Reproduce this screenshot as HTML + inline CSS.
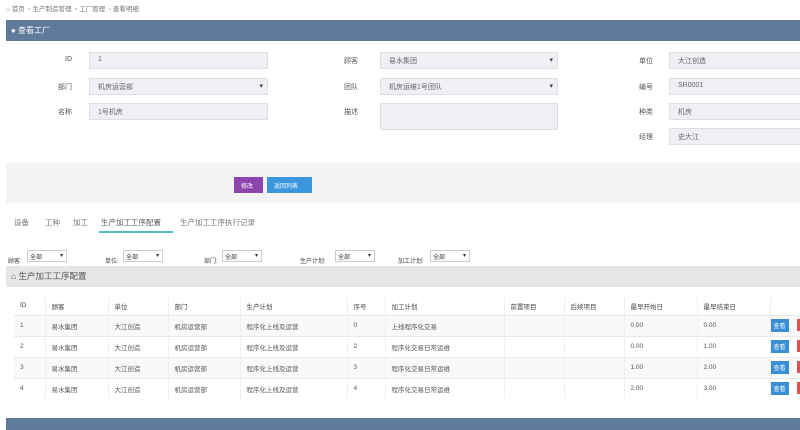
<!DOCTYPE html>
<html><head><meta charset="utf-8"><style>
*{margin:0;padding:0;box-sizing:border-box}
body{width:800px;height:430px;overflow:hidden;background:#fff;font-family:"Liberation Sans","Noto Sans CJK SC",sans-serif;font-size:7px;color:#555;position:relative}
.a{position:absolute;white-space:nowrap}
.inp{position:absolute;height:17px;background:#eef0f4;border:1px solid #dcdfe5;padding:3px 8px;font-size:7px;color:#666}
.sel::after{content:"▾";position:absolute;right:4px;top:3px;font-size:7px;color:#444}
.lbl{position:absolute;font-size:7px;color:#555;text-align:right;width:40px}
.fs{position:absolute;height:12px;border:1px solid #ccc;background:#fff;font-size:6px;padding:1px 2px;color:#333}
.fs::after{content:"▾";position:absolute;right:3px;top:1px}
.fl{position:absolute;font-size:6px;color:#444}
.t{position:absolute;top:217px;font-size:7.5px;color:#777;white-space:nowrap}
table{position:absolute;left:14px;top:297px;width:800px;table-layout:fixed;border-collapse:collapse;font-size:6.5px;color:#555}
td{height:21px;border-top:1px solid #e8e8e8;border-right:1px solid #f0f0f0;padding-left:6px;vertical-align:middle;white-space:nowrap;overflow:hidden}
tr.h td{height:18px;border-top:none;color:#444}
tr:nth-child(2) td,tr:nth-child(4) td{background:#f9f9f9}
td.last{padding-left:0}
.b{display:inline-block;background:#3a8fd4;color:#fff;font-size:6px;padding:2px 3px;vertical-align:middle}
.r{position:absolute;left:797px;width:4px;height:12px;background:#d9534f}
</style></head><body>
<div class="a" style="left:6px;top:3px;font-size:6.5px;color:#777">⌂ 首页 &nbsp;▫ 生产制造管理 &nbsp;▫ 工厂管理 &nbsp;▫ 查看明细</div>
<div class="a" style="left:6px;top:20px;width:794px;height:21px;background:#5f7a9b;color:#fff;font-size:8px;padding:5px 5px">● 查看工厂</div>

<div class="lbl" style="left:32px;top:56px">ID</div><div class="inp" style="left:89px;top:52px;width:179px">1</div>
<div class="lbl" style="left:32px;top:82px">部门</div><div class="inp sel" style="left:89px;top:78px;width:179px">机房运营部</div>
<div class="lbl" style="left:32px;top:107px">名称</div><div class="inp" style="left:89px;top:103px;width:179px">1号机房</div>

<div class="lbl" style="left:318px;top:56px">顾客</div><div class="inp sel" style="left:380px;top:52px;width:178px">易水集团</div>
<div class="lbl" style="left:318px;top:82px">团队</div><div class="inp sel" style="left:380px;top:78px;width:178px">机房运维1号团队</div>
<div class="lbl" style="left:318px;top:107px">描述</div><div class="inp" style="left:380px;top:103px;width:178px;height:27px"></div>

<div class="lbl" style="left:613px;top:56px">单位</div><div class="inp" style="left:669px;top:52px;width:140px">大江创造</div>
<div class="lbl" style="left:613px;top:82px">编号</div><div class="inp" style="left:669px;top:78px;width:140px">SR0001</div>
<div class="lbl" style="left:613px;top:107px">种类</div><div class="inp" style="left:669px;top:103px;width:140px">机房</div>
<div class="lbl" style="left:613px;top:132px">经理</div><div class="inp" style="left:669px;top:128px;width:140px">史大江</div>

<div class="a" style="left:6px;top:163px;width:794px;height:40px;background:#f4f4f4"></div>
<div class="a" style="left:234px;top:177px;width:29px;height:16px;background:#8e44ad;color:#fff;font-size:6px;padding:4px 7px">修改</div>
<div class="a" style="left:267px;top:177px;width:45px;height:16px;background:#3a97dd;color:#fff;font-size:6px;padding:4px 7px">返回列表</div>

<div class="t" style="left:14px">设备</div>
<div class="t" style="left:45px">工种</div>
<div class="t" style="left:73px">加工</div>
<div class="t" style="left:101px;color:#555">生产加工工序配置</div>
<div class="t" style="left:180px">生产加工工序执行记录</div>
<div class="a" style="left:99px;top:231px;width:74px;height:2px;background:#4fc0c8"></div>

<div class="fl" style="left:8px;top:256px">顾客:</div><div class="fs" style="left:27px;top:250px;width:40px">全部</div>
<div class="fl" style="left:105px;top:256px">单位:</div><div class="fs" style="left:123px;top:250px;width:40px">全部</div>
<div class="fl" style="left:204px;top:256px">部门:</div><div class="fs" style="left:222px;top:250px;width:40px">全部</div>
<div class="fl" style="left:300px;top:256px">生产计划:</div><div class="fs" style="left:335px;top:250px;width:40px">全部</div>
<div class="fl" style="left:398px;top:256px">加工计划:</div><div class="fs" style="left:430px;top:250px;width:40px">全部</div>

<div class="a" style="left:6px;top:266px;width:794px;height:21px;background:#e6e6e6;font-size:8.5px;color:#555;padding:4px 5px">⌂ 生产加工工序配置</div>

<table>
<colgroup><col style="width:31px"><col style="width:63px"><col style="width:60px"><col style="width:72px"><col style="width:107px"><col style="width:38px"><col style="width:119px"><col style="width:60px"><col style="width:60px"><col style="width:73px"><col style="width:73px"><col style="width:44px"></colgroup>
<tr class="h"><td>ID</td><td>顾客</td><td>单位</td><td>部门</td><td>生产计划</td><td>序号</td><td>加工计划</td><td>前置项目</td><td>后续项目</td><td>最早开始日</td><td>最早结束日</td><td class="last"></td></tr>
<tr><td>1</td><td>易水集团</td><td>大江创造</td><td>机房运营部</td><td>程序化上线及运营</td><td>0</td><td>上线程序化交易</td><td></td><td></td><td>0.00</td><td>0.00</td><td class="last"><span class="b">查看</span></td></tr>
<tr><td>2</td><td>易水集团</td><td>大江创造</td><td>机房运营部</td><td>程序化上线及运营</td><td>2</td><td>程序化交易日常运维</td><td></td><td></td><td>0.00</td><td>1.00</td><td class="last"><span class="b">查看</span></td></tr>
<tr><td>3</td><td>易水集团</td><td>大江创造</td><td>机房运营部</td><td>程序化上线及运营</td><td>3</td><td>程序化交易日常运维</td><td></td><td></td><td>1.00</td><td>2.00</td><td class="last"><span class="b">查看</span></td></tr>
<tr><td>4</td><td>易水集团</td><td>大江创造</td><td>机房运营部</td><td>程序化上线及运营</td><td>4</td><td>程序化交易日常运维</td><td></td><td></td><td>2.00</td><td>3.00</td><td class="last"><span class="b">查看</span></td></tr>
</table>
<div class="r" style="top:319px"></div>
<div class="r" style="top:340px"></div>
<div class="r" style="top:361px"></div>
<div class="r" style="top:382px"></div>

<div class="a" style="left:6px;top:418px;width:794px;height:12px;background:#5f7a9b"></div>
</body></html>
